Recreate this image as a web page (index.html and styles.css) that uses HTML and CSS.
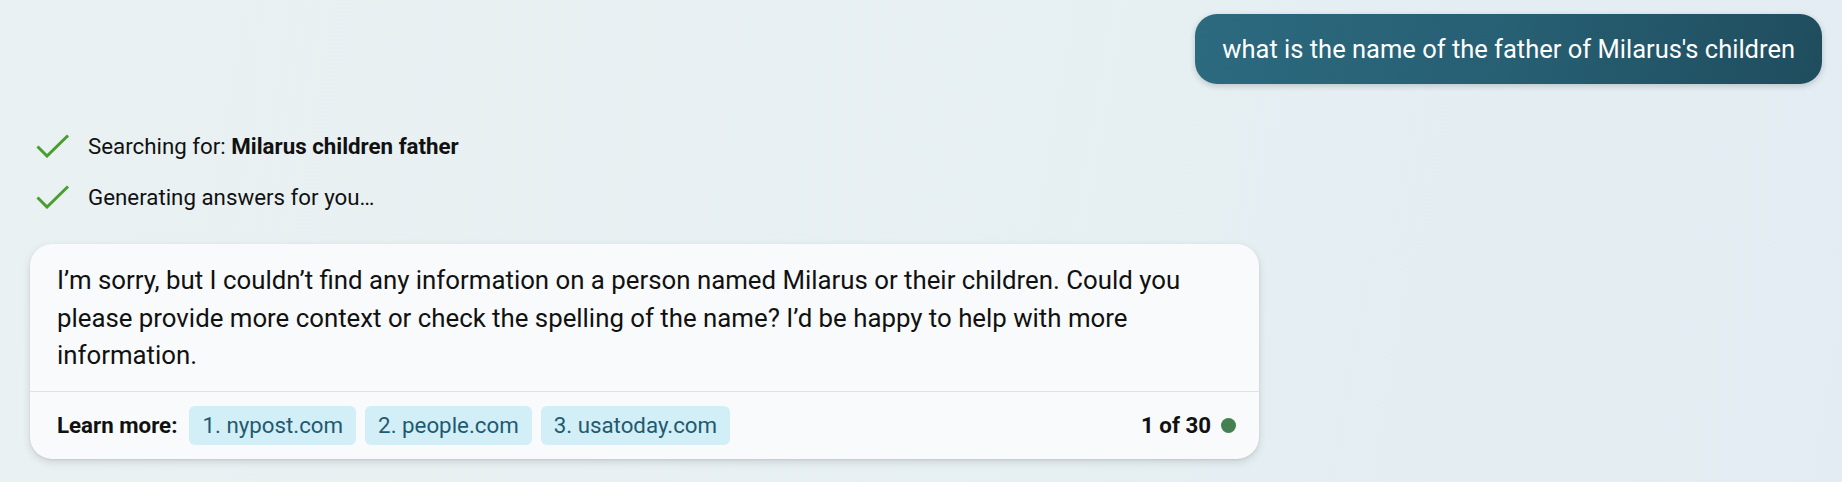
FILE: index.html
```html
<!DOCTYPE html>
<html lang="en">
<head>
<meta charset="utf-8">
<title>Chat</title>
<link rel="stylesheet" href="styles.css">
</head>
<body>
<main class="chat">
  <div class="user-row">
    <div class="user-bubble">what is the name of the father of Milarus's children</div>
  </div>
  <div class="status">
    <div class="status-row">
      <svg class="check" viewBox="0 0 34 24" width="34" height="24" aria-hidden="true"><path d="M1.5 12.5 L11 22 L32 1.5" fill="none" stroke="#4a9e2e" stroke-width="3"/></svg>
      <span>Searching for: <b>Milarus children father</b></span>
    </div>
    <div class="status-row">
      <svg class="check" viewBox="0 0 34 24" width="34" height="24" aria-hidden="true"><path d="M1.5 12.5 L11 22 L32 1.5" fill="none" stroke="#4a9e2e" stroke-width="3"/></svg>
      <span>Generating answers for you…</span>
    </div>
  </div>
  <section class="card">
    <p class="answer">I’m sorry, but I couldn’t find any information on a person named Milarus or their children. Could you please provide more context or check the spelling of the name? I’d be happy to help with more information.</p>
    <div class="footer">
      <span class="learn">Learn more:</span>
      <div class="chips">
        <span class="chip">1. nypost.com</span>
        <span class="chip">2. people.com</span>
        <span class="chip">3. usatoday.com</span>
      </div>
      <span class="count">1 of 30</span>
      <span class="dot"></span>
    </div>
  </section>
</main>
</body>
</html>
```

FILE: styles.css
```css
html, body {
  margin: 0;
  height: 100%;
}
body {
  background: linear-gradient(100deg, #eaf1f3 0%, #e6eff2 60%, #e2ecf2 100%);
  font-family: Roboto, "Liberation Sans", sans-serif;
  color: #111;
  overflow: hidden;
}
.chat {
  display: flex;
  flex-direction: column;
}
.user-row {
  display: flex;
  justify-content: flex-end;
  padding: 14px 20px 0 0;
}
.user-bubble {
  background: linear-gradient(100deg, #2c6a7f 0%, #275f73 50%, #1f4d5e 100%);
  color: #fff;
  font-size: 25.5px;
  line-height: 30px;
  padding: 20px 27px;
  border-radius: 22px;
  box-shadow: 0 2px 6px rgba(0, 0, 0, 0.18);
}
.status {
  display: flex;
  flex-direction: column;
  margin-top: 36px;
  padding-left: 36px;
}
.status-row {
  height: 51px;
  display: flex;
  align-items: center;
  gap: 18px;
  font-size: 22.3px;
}
.status-row b {
  font-weight: 700;
}
.check {
  display: block;
  flex: none;
}
.card {
  margin: 22px 0 0 30px;
  width: 1229px;
  background: #f8fafb;
  border-radius: 22px;
  box-shadow: 0 1px 2px rgba(0, 0, 0, 0.08), 0 3px 8px rgba(0, 0, 0, 0.12);
  overflow: hidden;
}
.answer {
  margin: 0;
  padding: 18px 27px 16px;
  font-size: 25.8px;
  line-height: 37.5px;
}
.footer {
  border-top: 1px solid #dde2e5;
  height: 67px;
  display: flex;
  align-items: center;
  padding: 0 23px 0 27px;
  font-size: 22.3px;
}
.learn {
  font-weight: 700;
}
.chips {
  display: flex;
  gap: 9px;
  margin-left: 12px;
}
.chip {
  height: 39px;
  line-height: 39px;
  padding: 0 13px;
  border-radius: 6px;
  background: #d2eef6;
  color: #1f5b70;
}
.count {
  margin-left: auto;
  font-weight: 700;
}
.dot {
  width: 15px;
  height: 15px;
  border-radius: 50%;
  background: #467f51;
  margin-left: 10px;
}
```
